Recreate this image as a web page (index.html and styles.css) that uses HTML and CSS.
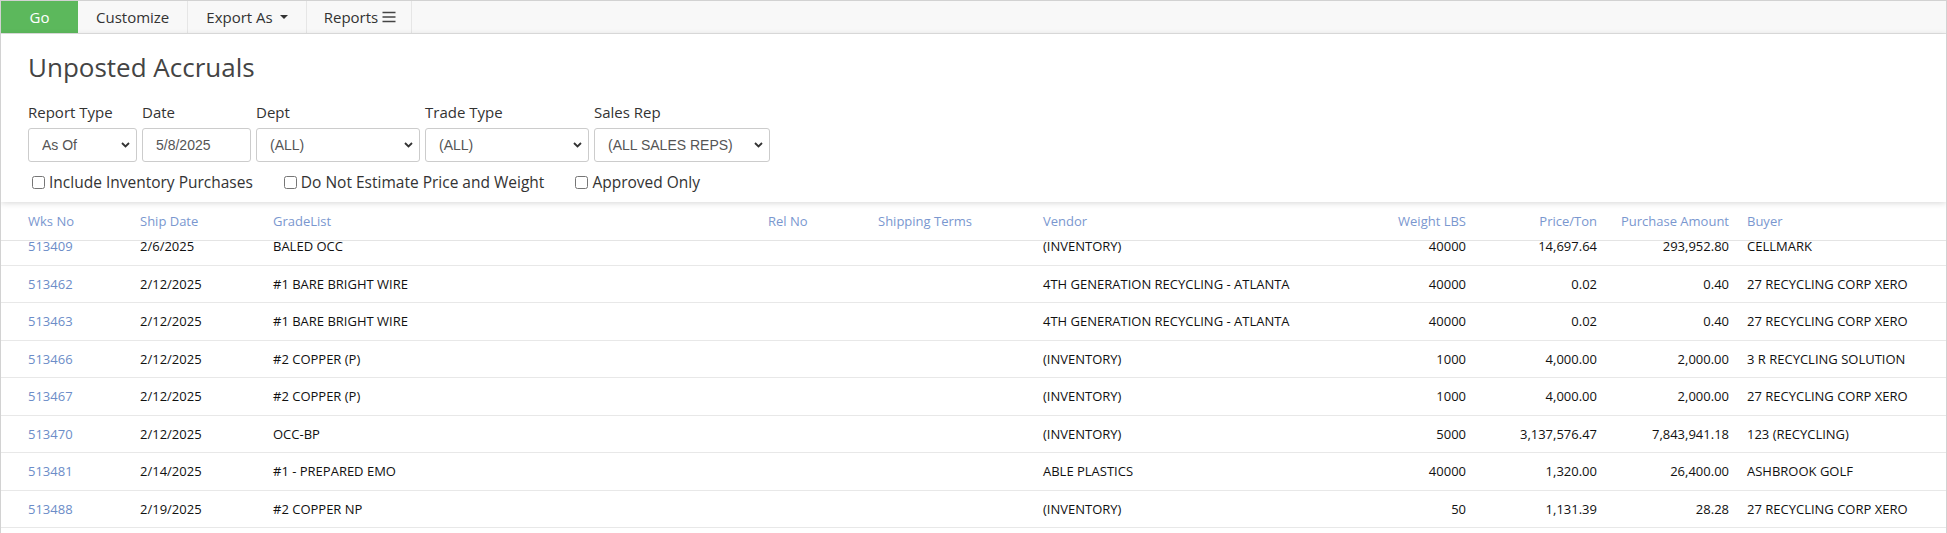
FILE: index.html
```html
<!DOCTYPE html>
<html lang="en">
<head>
    <meta charset="UTF-8">
    <meta name="viewport" content="width=device-width, initial-scale=1.0">
    <title>Unposted Accruals</title>
    <link rel="stylesheet" href="styles.css">
</head>
<body>
    <div class="page">
        <div class="toolbar">
            <button class="tb-btn btn-go">Go</button>
            <button class="tb-btn">Customize</button>
            <button class="tb-btn">Export As <span class="caret"></span></button>
            <button class="tb-btn btn-reports">Reports
                <svg class="menu-icon" width="14" height="12" viewBox="0 0 14 12">
                    <path d="M0.5 1.5H13.5M0.5 6H13.5M0.5 10.5H13.5" stroke="#444" stroke-width="1.3" fill="none"/>
                </svg>
            </button>
        </div>

        <div class="filters">
            <h1>Unposted Accruals</h1>
            <div class="filter-row">
                <div class="field">
                    <label for="reportType">Report Type</label>
                    <div class="select-wrap w-sm">
                        <select id="reportType"><option>As Of</option></select>
                        <svg class="chev" width="9" height="6" viewBox="0 0 9 6"><path d="M1 1L4.5 4.5L8 1" stroke="#333" stroke-width="1.8" fill="none"/></svg>
                    </div>
                </div>
                <div class="field">
                    <label for="date">Date</label>
                    <div class="w-sm">
                        <input type="text" id="date" value="5/8/2025">
                    </div>
                </div>
                <div class="field">
                    <label for="dept">Dept</label>
                    <div class="select-wrap w-md">
                        <select id="dept"><option>(ALL)</option></select>
                        <svg class="chev" width="9" height="6" viewBox="0 0 9 6"><path d="M1 1L4.5 4.5L8 1" stroke="#333" stroke-width="1.8" fill="none"/></svg>
                    </div>
                </div>
                <div class="field">
                    <label for="tradeType">Trade Type</label>
                    <div class="select-wrap w-md">
                        <select id="tradeType"><option>(ALL)</option></select>
                        <svg class="chev" width="9" height="6" viewBox="0 0 9 6"><path d="M1 1L4.5 4.5L8 1" stroke="#333" stroke-width="1.8" fill="none"/></svg>
                    </div>
                </div>
                <div class="field">
                    <label for="salesRep">Sales Rep</label>
                    <div class="select-wrap w-lg">
                        <select id="salesRep"><option>(ALL SALES REPS)</option></select>
                        <svg class="chev" width="9" height="6" viewBox="0 0 9 6"><path d="M1 1L4.5 4.5L8 1" stroke="#333" stroke-width="1.8" fill="none"/></svg>
                    </div>
                </div>
            </div>
            <div class="check-row">
                <label class="check"><input type="checkbox">Include Inventory Purchases</label>
                <label class="check"><input type="checkbox">Do Not Estimate Price and Weight</label>
                <label class="check"><input type="checkbox">Approved Only</label>
            </div>
        </div>

        <table class="grid grid-head">
            <colgroup>
                <col class="c1"><col class="c2"><col class="c3"><col class="c4"><col class="c5">
                <col class="c6"><col class="c7"><col class="c8"><col class="c9"><col class="c10">
            </colgroup>
            <tr>
                <th>Wks No</th>
                <th>Ship Date</th>
                <th>GradeList</th>
                <th>Rel No</th>
                <th>Shipping Terms</th>
                <th>Vendor</th>
                <th class="num">Weight LBS</th>
                <th class="num">Price/Ton</th>
                <th class="num">Purchase Amount</th>
                <th>Buyer</th>
            </tr>
        </table>

        <div class="grid-body">
            <table class="grid" id="accrualsTable">
                <colgroup>
                    <col class="c1"><col class="c2"><col class="c3"><col class="c4"><col class="c5">
                    <col class="c6"><col class="c7"><col class="c8"><col class="c9"><col class="c10">
                </colgroup>
                <tr>
                    <td><a href="#">513409</a></td><td>2/6/2025</td><td>BALED OCC</td><td></td><td></td>
                    <td>(INVENTORY)</td><td class="num">40000</td><td class="num">14,697.64</td><td class="num">293,952.80</td><td>CELLMARK</td>
                </tr>
                <tr>
                    <td><a href="#">513462</a></td><td>2/12/2025</td><td>#1 BARE BRIGHT WIRE</td><td></td><td></td>
                    <td>4TH GENERATION RECYCLING - ATLANTA</td><td class="num">40000</td><td class="num">0.02</td><td class="num">0.40</td><td>27 RECYCLING CORP XERO</td>
                </tr>
                <tr>
                    <td><a href="#">513463</a></td><td>2/12/2025</td><td>#1 BARE BRIGHT WIRE</td><td></td><td></td>
                    <td>4TH GENERATION RECYCLING - ATLANTA</td><td class="num">40000</td><td class="num">0.02</td><td class="num">0.40</td><td>27 RECYCLING CORP XERO</td>
                </tr>
                <tr>
                    <td><a href="#">513466</a></td><td>2/12/2025</td><td>#2 COPPER (P)</td><td></td><td></td>
                    <td>(INVENTORY)</td><td class="num">1000</td><td class="num">4,000.00</td><td class="num">2,000.00</td><td>3 R RECYCLING SOLUTION</td>
                </tr>
                <tr>
                    <td><a href="#">513467</a></td><td>2/12/2025</td><td>#2 COPPER (P)</td><td></td><td></td>
                    <td>(INVENTORY)</td><td class="num">1000</td><td class="num">4,000.00</td><td class="num">2,000.00</td><td>27 RECYCLING CORP XERO</td>
                </tr>
                <tr>
                    <td><a href="#">513470</a></td><td>2/12/2025</td><td>OCC-BP</td><td></td><td></td>
                    <td>(INVENTORY)</td><td class="num">5000</td><td class="num">3,137,576.47</td><td class="num">7,843,941.18</td><td>123 (RECYCLING)</td>
                </tr>
                <tr>
                    <td><a href="#">513481</a></td><td>2/14/2025</td><td>#1 - PREPARED EMO</td><td></td><td></td>
                    <td>ABLE PLASTICS</td><td class="num">40000</td><td class="num">1,320.00</td><td class="num">26,400.00</td><td>ASHBROOK GOLF</td>
                </tr>
                <tr>
                    <td><a href="#">513488</a></td><td>2/19/2025</td><td>#2 COPPER NP</td><td></td><td></td>
                    <td>(INVENTORY)</td><td class="num">50</td><td class="num">1,131.39</td><td class="num">28.28</td><td>27 RECYCLING CORP XERO</td>
                </tr>
            </table>
        </div>
    </div>
</body>
</html>
```

FILE: styles.css
```css
html, body {
    margin: 0;
    padding: 0;
    background-color: #fff;
}
body {
    font-family: "Open Sans", Arial, sans-serif;
    color: #333;
}
.page {
    height: 533px;
    box-sizing: border-box;
    border: 1px solid #d2d2d2;
    border-bottom: none;
    overflow: hidden;
    display: flex;
    flex-direction: column;
}

/* toolbar */
.toolbar {
    display: flex;
    height: 32px;
    background-color: #f8f8f8;
    border-bottom: 1px solid #e3e3e3;
    flex-shrink: 0;
}
.tb-btn {
    display: flex;
    align-items: center;
    padding: 0 18px;
    border: none;
    border-right: 1px solid #e6e6e6;
    background: transparent;
    font-family: "Open Sans", Arial, sans-serif;
    font-size: 15px;
    color: #333;
    cursor: pointer;
}
.btn-go {
    width: 77px;
    justify-content: center;
    padding: 0;
    background-color: #5cb85c;
    border-right: none;
    color: #fff;
}
.btn-reports {
    padding: 0 15px 0 17px;
}
.caret {
    display: inline-block;
    margin-left: 7px;
    border-top: 4px solid #333;
    border-left: 4px solid transparent;
    border-right: 4px solid transparent;
}
.menu-icon {
    margin-left: 4px;
}

/* filters */
.filters {
    position: relative;
    z-index: 1;
    background-color: #fff;
    padding: 15px 27px 10px;
    box-shadow: 0 1px 6px rgba(0, 0, 0, 0.16);
    flex-shrink: 0;
}
h1 {
    margin: 0;
    font-size: 26px;
    font-weight: normal;
    line-height: 36px;
    color: #444;
}
.filter-row {
    display: flex;
    gap: 5px;
    margin-top: 17px;
}
.field {
    display: flex;
    flex-direction: column;
}
.field label {
    font-size: 15px;
    line-height: 20px;
    margin-bottom: 6px;
    color: #333;
}
.select-wrap {
    position: relative;
}
select,
input[type="text"] {
    box-sizing: border-box;
    width: 100%;
    height: 34px;
    margin: 0;
    padding: 0 24px 0 13px;
    border: 1px solid #ccc;
    border-radius: 3px;
    background-color: #fff;
    font-family: "Liberation Sans", Arial, sans-serif;
    font-size: 14px;
    color: #555;
    appearance: none;
    -webkit-appearance: none;
}
.chev {
    position: absolute;
    right: 7px;
    top: 14px;
    pointer-events: none;
}
.w-sm { width: 109px; }
.w-md { width: 164px; }
.w-lg { width: 176px; }

.check-row {
    display: flex;
    margin-top: 10px;
}
.check {
    display: flex;
    align-items: center;
    font-size: 15.5px;
    line-height: 20px;
    margin-right: 27px;
    color: #333;
}
.check input {
    width: 13px;
    height: 13px;
    margin: 0 4px 0 4px;
}

/* grid */
.grid {
    width: 100%;
    table-layout: fixed;
    border-collapse: collapse;
    font-size: 13px;
    line-height: 18px;
}
.grid th,
.grid td {
    padding: 0 8px;
    text-align: left;
    white-space: nowrap;
    overflow: hidden;
}
.grid th {
    padding-top: 10px;
    padding-bottom: 10px;
    font-weight: normal;
    color: #7a97cf;
    border-bottom: 1px solid #e4e4e4;
}
.grid td {
    padding-top: 9.25px;
    padding-bottom: 9.25px;
    color: #111;
    border-bottom: 1px solid #e8e8e8;
}
.grid th:first-child,
.grid td:first-child {
    padding-left: 27px;
}
.grid .num {
    text-align: right;
}
.grid th:nth-child(9),
.grid td:nth-child(9) {
    padding-right: 10px;
}
.grid a {
    color: #6c8dc8;
    text-decoration: none;
}
.grid-head {
    flex-shrink: 0;
    background-color: #fff;
}
.grid-body {
    flex: 1;
    overflow: hidden;
}
.grid-body .grid {
    margin-top: -13px;
}
.c1 { width: 131px; }
.c2 { width: 133px; }
.c3 { width: 495px; }
.c4 { width: 110px; }
.c5 { width: 165px; }
.c6 { width: 340px; }
.c7 { width: 99px; }
.c8 { width: 131px; }
.c9 { width: 134px; }
.c10 { width: 207px; }
```
